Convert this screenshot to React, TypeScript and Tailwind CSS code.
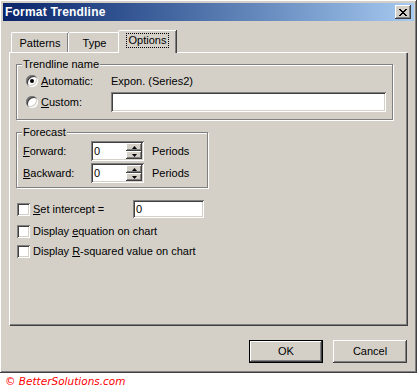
import React from 'react';

// Classic 3D edges
const raised = 'shadow-[inset_-1px_-1px_0_#404040,inset_1px_1px_0_#ffffff,inset_-2px_-2px_0_#808080,inset_2px_2px_0_#d4d0c8]';
const sunken = 'shadow-[inset_1px_1px_0_#808080,inset_-1px_-1px_0_#ffffff,inset_2px_2px_0_#404040,inset_-2px_-2px_0_#d4d0c8]';

const Key = ({ children }: { children: React.ReactNode }) => <span className="underline underline-offset-[1px]">{children}</span>;

const Radio = ({ checked }: { checked?: boolean }) => (
    <div className={`w-[12px] h-[12px] rounded-full bg-white flex items-center justify-center shrink-0 ${sunken}`}>
        {checked && <div className="w-[4px] h-[4px] rounded-full bg-black" />}
    </div>
);

const Checkbox = () => <div className={`w-[13px] h-[13px] bg-white shrink-0 ${sunken}`} />;

const Group = ({ title, className, children }: { title: string; className: string; children: React.ReactNode }) => (
    <div className={`relative border border-[#808080] shadow-[1px_1px_0_#ffffff,inset_1px_1px_0_#ffffff] ${className}`}>
        <span className="absolute -top-[8px] left-[5px] bg-[#d4d0c8] px-px leading-[14px]">{title}</span>
        {children}
    </div>
);

const SpinBox = () => (
    <div className={`w-[53px] h-[20px] bg-white flex items-center pl-[3px] pr-[2px] ${sunken}`}>
        <span className="flex-1">0</span>
        <div className="flex flex-col w-[16px] h-[16px]">
            {['up', 'down'].map(dir => (
                <div key={dir} className={`h-[8px] bg-[#d4d0c8] flex items-center justify-center ${raised}`}>
                    <svg width="5" height="3" viewBox="0 0 5 3">
                        <path d={dir === 'up' ? 'M2.5 0 L5 3 L0 3 Z' : 'M0 0 L5 0 L2.5 3 Z'} fill="#000" />
                    </svg>
                </div>
            ))}
        </div>
    </div>
);

const tabs = ['Patterns', 'Type', 'Options'];

export default function App() {
    return (
        <div className="w-[417px] h-[389px] bg-white font-['Liberation_Sans',sans-serif] text-[11px] text-black">
            <div className={`w-[417px] h-[373px] bg-[#d4d0c8] p-[3px] flex flex-col ${raised}`}>
                {/* Title bar */}
                <div className="h-[18px] flex items-center justify-between pl-[2px] pr-[3px] bg-gradient-to-r from-[#0a246a] to-[#a6caf0]">
                    <span className="text-white font-bold text-[12px] font-['Liberation_Sans',sans-serif] tracking-[0.2px]">Format Trendline</span>
                    <div className={`w-[16px] h-[14px] bg-[#d4d0c8] flex items-center justify-center ${raised}`}>
                        <svg width="8" height="7" viewBox="0 0 8 7" shapeRendering="crispEdges">
                            <path d="M0 0h2v1h-2zM6 0h2v1h-2zM1 1h2v1h-2zM5 1h2v1h-2zM2 2h4v1h-4zM3 3h2v1h-2zM2 4h4v1h-4zM1 5h2v1h-2zM5 5h2v1h-2zM0 6h2v1h-2zM6 6h2v1h-2z" fill="#000" />
                        </svg>
                    </div>
                </div>

                {/* Tabs */}
                <div className="mt-[9px] ml-[6px] w-[398px]">
                    <div className="flex items-end h-[22px] pl-[2px]">
                        {tabs.map(t => {
                            const active = t === 'Options';
                            return (
                                <div
                                    key={t}
                                    className={`relative flex items-center justify-center border-t border-l border-white rounded-tl-[2px] shadow-[inset_-1px_0_0_#808080,1px_0_0_#404040] bg-[#d4d0c8] ${
                                        active ? 'z-10 h-[23px] -mb-px -mx-[2px] w-[58px] pb-[3px]' : 'h-[20px] pt-[1px]'
                                    } ${t === 'Patterns' ? 'w-[57px]' : ''} ${t === 'Type' ? 'w-[52px]' : ''}`}
                                >
                                    <span className={active ? 'border border-dotted border-black px-[2px] leading-[13px]' : ''}>{t}</span>
                                </div>
                            );
                        })}
                    </div>
                    <div className={`h-[273px] px-[6px] pt-[11px] border-t border-l border-white shadow-[inset_-1px_-1px_0_#808080,1px_1px_0_#404040] flex flex-col`}>
                        <Group title="Trendline name" className="w-[377px] h-[56px] pt-[7px]">
                            <div className="flex items-center h-[18px] pl-[9px]">
                                <Radio checked />
                                <span className="ml-[3px] w-[70px]"><Key>A</Key>utomatic:</span>
                                <span>Expon. (Series2)</span>
                            </div>
                            <div className="flex items-center h-[20px] mt-[2px] pl-[9px]">
                                <Radio />
                                <span className="ml-[3px] w-[70px]"><Key>C</Key>ustom:</span>
                                <div className={`w-[275px] h-[20px] bg-white ${sunken}`} />
                            </div>
                        </Group>

                        <Group title="Forecast" className="w-[192px] h-[56px] mt-[12px] pt-[8px]">
                            {[['F', 'orward:'], ['B', 'ackward:']].map(([k, rest], i) => (
                                <div key={k} className={`flex items-center h-[20px] pl-[6px] ${i ? 'mt-[2px]' : ''}`}>
                                    <span className="w-[68px]"><Key>{k}</Key>{rest}</span>
                                    <SpinBox />
                                    <span className="ml-[8px]">Periods</span>
                                </div>
                            ))}
                        </Group>

                        <div className="flex items-center h-[18px] mt-[12px] pl-px">
                            <Checkbox />
                            <span className="ml-[3px] w-[100px]"><Key>S</Key>et intercept =</span>
                            <div className={`w-[71px] h-[18px] bg-white pl-[3px] flex items-center ${sunken}`}>0</div>
                        </div>
                        <div className="flex items-center h-[20px] mt-[3px] pl-px">
                            <Checkbox />
                            <span className="ml-[3px]">Display <Key>e</Key>quation on chart</span>
                        </div>
                        <div className="flex items-center h-[20px] pl-px">
                            <Checkbox />
                            <span className="ml-[3px]">Display <Key>R</Key>-squared value on chart</span>
                        </div>
                    </div>

                    {/* Buttons */}
                    <div className="flex justify-end gap-[10px] mt-[15px]">
                        <div className="w-[74px] h-[23px] border border-black">
                            <div className={`w-full h-full flex items-center justify-center ${raised}`}>OK</div>
                        </div>
                        <div className={`w-[74px] h-[23px] flex items-center justify-center ${raised}`}>Cancel</div>
                    </div>
                </div>
            </div>
            <div className="pl-[5px] pt-px text-[10.5px] italic text-[#ff0000] font-['DejaVu_Sans',sans-serif] leading-[14px]">
                © BetterSolutions.com
            </div>
        </div>
    );
}
